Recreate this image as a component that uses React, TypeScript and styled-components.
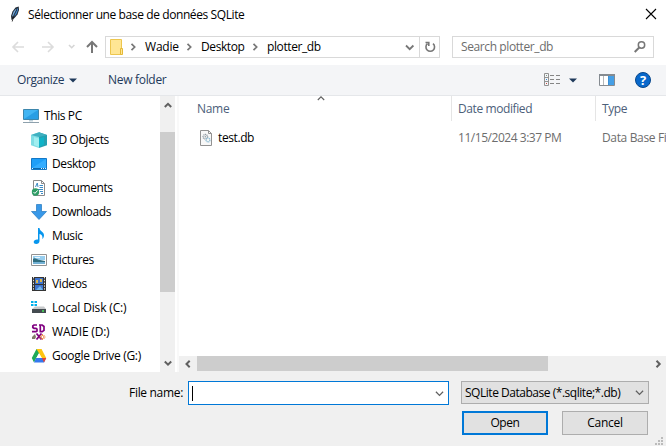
import React from 'react';
import styled, { createGlobalStyle } from 'styled-components';

const Global = createGlobalStyle`
  * { box-sizing: border-box; }
  body { margin: 0; background: #fff; overflow: hidden; }
`;

const Dialog = styled.div`
  width: 666px;
  height: 446px;
  display: flex;
  flex-direction: column;
  overflow: hidden;
  background: #fff;
  color: #000;
  font: 12px/16px 'Open Sans', 'Noto Sans', sans-serif;
`;

const Label = styled.span<{ $track?: number; $color?: string }>`
  display: block;
  flex: none;
  white-space: pre;
  color: ${(p) => p.$color ?? 'inherit'};
  letter-spacing: ${(p) => p.$track ?? -0.4}px;
`;

const Icon = styled.svg`
  display: block;
  flex: none;
  overflow: visible;
`;

const TitleBar = styled.header`
  height: 30px;
  flex: none;
  display: flex;
  align-items: center;
  padding: 0 10px 2px 7px;
  gap: 5px;
`;

const TitleText = styled(Label)`
  margin-top: 2px;
`;

const Grow = styled.div`
  flex: 1;
`;

const NavBar = styled.nav`
  height: 35px;
  flex: none;
  display: flex;
  align-items: flex-start;
  padding: 6px 12px 0 11px;
`;

const NavArrows = styled.div`
  width: 94px;
  height: 22px;
  flex: none;
`;

const AddressBox = styled.div`
  width: 335px;
  height: 22px;
  flex: none;
  display: flex;
  align-items: center;
  border: 1px solid #d9d9d9;
  padding-left: 4px;
`;

const Crumb = styled.div<{ $width: number; $indent?: number }>`
  width: ${(p) => p.$width}px;
  padding-left: ${(p) => p.$indent ?? 0}px;
  flex: none;
  display: flex;
  align-items: center;
  gap: 8px;
`;

const RefreshCell = styled.div`
  width: 20px;
  height: 20px;
  flex: none;
  display: flex;
  align-items: center;
  justify-content: center;
  border-left: 1px solid #d9d9d9;
`;

const SearchBox = styled.div`
  width: 202px;
  height: 22px;
  margin-left: 12px;
  display: flex;
  align-items: center;
  justify-content: space-between;
  border: 1px solid #d9d9d9;
  padding: 0 7px 0 8px;
`;

const Toolbar = styled.div`
  height: 31px;
  flex: none;
  display: flex;
  align-items: center;
  padding: 0 15px 0 17px;
  background: #f4f5f7;
  border-bottom: 1px solid #e5e7ea;
`;

const MenuButton = styled.div<{ $width: number; $gap: number }>`
  width: ${(p) => p.$width}px;
  flex: none;
  display: flex;
  align-items: center;
  gap: ${(p) => p.$gap}px;
`;

const HelpBadge = styled.div`
  width: 16px;
  height: 16px;
  margin-left: 20px;
  flex: none;
  border: 1px solid #07478c;
  border-radius: 50%;
  background: #0868cb;
  color: #fff;
  font: bold 13px/14px 'Open Sans', sans-serif;
  text-align: center;
`;

const Content = styled.main`
  height: 276px;
  flex: none;
  display: flex;
`;

const Sidebar = styled.ul`
  width: 160px;
  margin: 0;
  padding: 8px 0 0;
  list-style: none;
  flex: none;
`;

const TreeRow = styled.li<{ $root?: boolean }>`
  height: 24px;
  display: flex;
  align-items: center;
  gap: 5px;
  padding-left: ${(p) => (p.$root ? 23 : 31)}px;
`;

const VScroll = styled.div`
  width: 15px;
  flex: none;
  display: flex;
  flex-direction: column;
  background: #f0f0f0;
`;

const VArrow = styled.div<{ $height: number }>`
  height: ${(p) => p.$height}px;
  display: flex;
  justify-content: center;
  align-items: flex-start;
  padding-top: 5px;
`;

const VThumb = styled.div`
  height: 160px;
  background: #cdcdcd;
`;

const Splitter = styled.div`
  width: 4px;
  flex: none;
  border-right: 2px solid #f9f9f9;
`;

const FilePane = styled.section`
  flex: 1;
  min-width: 0;
  display: flex;
  flex-direction: column;
`;

const HeaderRow = styled.div`
  height: 25px;
  flex: none;
  display: flex;
  color: #4c607a;
`;

const HeaderCell = styled.div<{ $width: number; $pad: number }>`
  width: ${(p) => p.$width}px;
  flex: none;
  display: flex;
  align-items: center;
  padding-left: ${(p) => p.$pad}px;
  border-right: 1px solid #e5e5e5;

  &:last-child {
    border-right: 0;
  }
`;

const SortMark = styled.div`
  align-self: flex-start;
  margin: -2px 0 0 88px;
`;

const FileRow = styled.div`
  height: 22px;
  margin-top: 6px;
  display: flex;
  align-items: center;
  color: #6d6d6d;
`;

const FileCell = styled.div<{ $width: number; $pad: number }>`
  width: ${(p) => p.$width}px;
  flex: none;
  display: flex;
  align-items: center;
  gap: 5px;
  padding-left: ${(p) => p.$pad}px;
`;

const HScroll = styled.div`
  height: 16px;
  flex: none;
  display: flex;
  align-items: center;
  background: #f0f0f0;
  padding: 0 4px 1px 5px;
`;

const HThumb = styled.div`
  width: 351px;
  height: 15px;
  margin-left: 5px;
  background: #cdcdcd;
`;

const Footer = styled.footer`
  flex: 1;
  background: #f0f0f0;
  position: relative;
  padding: 9px 17px 0 0;
`;

const FieldRow = styled.div`
  display: flex;
  align-items: center;
  justify-content: flex-end;
  height: 24px;
`;

const FileInput = styled.div`
  width: 261px;
  height: 24px;
  margin: 0 12px 0 5px;
  display: flex;
  align-items: center;
  justify-content: space-between;
  padding: 0 4px 0 3px;
  border: 1px solid #0078d7;
  background: #fff;
`;

const Caret = styled.div`
  width: 1px;
  height: 15px;
  background: #000;
`;

const Select = styled.div`
  width: 188px;
  height: 23px;
  margin-bottom: 1px;
  display: flex;
  align-items: center;
  justify-content: space-between;
  padding: 0 4px 0 3px;
  border: 1px solid #adadad;
  background: #e1e1e1;
`;

const ButtonRow = styled.div`
  display: flex;
  justify-content: flex-end;
  gap: 14px;
  margin-top: 6px;
  padding-right: 1px;
`;

const Button = styled.button<{ $primary?: boolean }>`
  width: 86px;
  height: 24px;
  padding: 0;
  display: flex;
  align-items: center;
  justify-content: center;
  font: inherit;
  color: #000;
  background: #e1e1e1;
  border: ${(p) => (p.$primary ? '2px solid #0078d7' : '1px solid #adadad')};
`;

const Grip = styled(Icon)`
  position: absolute;
  right: 3px;
  bottom: 0;
`;

type ChevronProps = { dir: 'up' | 'down' | 'left' | 'right'; size?: number; color?: string; weight?: number };

function Chevron({ dir, size = 8, color = '#606060', weight = 2 }: ChevronProps) {
  const d = {
    up: 'M.8 6 4 2.8 7.2 6',
    down: 'M.8 2.5 4 5.7 7.2 2.5',
    left: 'M5.7.8 2.5 4l3.2 3.2',
    right: 'M2.5.8 5.7 4 2.5 7.2',
  }[dir];
  return (
    <Icon width={size} height={size} viewBox="0 0 8 8" fill="none" stroke={color} strokeWidth={weight}>
      <path d={d} />
    </Icon>
  );
}

const Feather = () => (
  <Icon width="16" height="16" viewBox="0 0 16 16">
    <path d="M4.500 14 4 10 5.500 5.500 8.500 1.500 11.700.500 12 4 10.500 8.500 7.500 12Z" fill="#222b36" />
    <path d="M5.200 10 6.500 5.800 9.200 2.500 9 6 6.500 11Z" fill="#79aee0" />
    <path d="M8.500 6 10.700 1.800 11 4 9.500 8 7.200 10.800Z" fill="#3f86cc" />
    <path d="M9.500 4 7 9 5.200 15.500" fill="none" stroke="#111" strokeWidth=".8" />
  </Icon>
);

const Folder = () => (
  <Icon width="15" height="18" viewBox="0 0 15 18">
    <path d="M.5 1.5h11v15H.5z" fill="#ffe694" stroke="#edc64e" />
    <path d="M10.500 10.500h2v6h-2z" fill="#ffe694" stroke="#e5b936" />
  </Icon>
);

const ThisPc = () => (
  <Icon width="16" height="16">
    <path d="M.5 1.5h15v10H.5z" fill="#42b5f3" stroke="#3d86ac" />
    <path d="M1 11 15 2v9z" fill="#289ee4" />
    <path d="M6 12h4v1.500H6z" fill="#bdd0da" />
    <path d="M0 14.500h16" stroke="#8ea1ad" />
  </Icon>
);

const Objects3d = () => (
  <Icon width="16" height="16">
    <path d="M0 3 8 .300V16l-8-2.700z" fill="#7fdde4" />
    <path d="M8 .300 16 3v10.300L8 16z" fill="#25a0b1" />
    <path d="M0 3 8 .300 16 3 8 5z" fill="#3fb0c0" />
    <path d="M3 5 8 6.500V15l-5-2z" fill="#a0eef0" />
    <path d="M8 6.500 13 5v7.500L8 15z" fill="#0fb3c8" />
  </Icon>
);

const DesktopIcon = () => (
  <Icon width="16" height="16">
    <path d="M.5 2.5h15v11H.5z" fill="#1e9ff8" stroke="#1478c6" />
    <path d="M1 12 15 3v9z" fill="#34adff" />
    <path d="M1 12.500h14" stroke="#0868af" />
    <path d="M1 12.500h1m8 0h1m1 0h1m1 0h1" stroke="#e5f6ff" />
  </Icon>
);

const DocumentsIcon = () => (
  <Icon width="16" height="16">
    <path d="M2.5.5h8l3 3v12h-11z" fill="#fff" stroke="#8b8b8b" />
    <path d="M10.5.5v3h3" fill="none" stroke="#8b8b8b" />
    <path d="m4.500 7 1.800-4 .7 4m1.500-1.500h3.500m-3.500 2h3.500M4.500 9.500H12m-3 2h3m-2 2h2" fill="none" stroke="#3c8bc5" />
    <circle cx="4.500" cy="12" r="3.700" fill="#2f9d66" />
    <path d="m2.500 12 1.400 1.400 2.800-3" fill="none" stroke="#fff" />
  </Icon>
);

const DownloadsIcon = () => (
  <Icon width="16" height="16">
    <path d="M5.5.5h5v7h5L8 15.500.5 7.500h5z" fill="#3898e8" stroke="#2378bf" strokeWidth=".7" />
  </Icon>
);

const MusicIcon = () => (
  <Icon width="16" height="16">
    <path d="M7 0h1.500c0 3 4.500 3.700 4.500 7.300 0 2-.8 3-1.600 3.800.5-3-.8-4.600-2.900-5.100v7c0 2-1.500 3-3.300 3-1.500 0-2.500-.8-2.500-2 0-1.900 2.300-3 4.300-2.500z" fill="#0796ee" />
  </Icon>
);

const PicturesIcon = () => (
  <Icon width="16" height="16">
    <path d="M.5 2.500h15v11H.5z" fill="#fff" stroke="#929292" />
    <path d="M2 4h12v4H2z" fill="#98ceef" />
    <path d="M2 7c2-2 4 1 7 1l5 1v1H2z" fill="#316e80" />
    <path d="M2 10h12v2H2z" fill="#74b2d5" />
    <path d="M4 5.500h5" stroke="#e6f6ff" />
  </Icon>
);

const VideosIcon = () => (
  <Icon width="16" height="16">
    <path d="M1 1h14v14H1z" fill="#343434" />
    <path d="M4 2h8v6H4zM4 9h8v5H4z" fill="#3f74ce" />
    <path d="M2.500 1v14M13.500 1v14" stroke="#e1e1e1" strokeDasharray="1.400 1.400" />
    <path d="M5 4h2v3H5zm4-1h2v3H9z" fill="#ddb749" />
    <path d="m5 14 4-4 3 4z" fill="#74b9ee" />
  </Icon>
);

const DiskIcon = () => (
  <Icon width="16" height="16">
    <path d="M0 1h2.500v2H0zm3.500 0H6v2H3.500zM0 4h2.500v2H0zm3.500 0H6v2H3.500z" fill="#00afe9" />
    <path d="m1 9 3-2.500h9l2 2.500z" fill="#c7c9cb" />
    <path d="M1 9h14v4H1z" fill="#444b50" />
    <path d="M11 11h2" stroke="#48e25a" strokeWidth="1.500" />
  </Icon>
);

const SdIcon = () => (
  <Icon width="16" height="16" fill="none">
    <path d="M6 1H3L1.800 2v1.500L3 4.300h2l1 .8V7L5 7.700H1M8 1h3.200L13 2.500v3.800L11.200 7.700H9.300V1" stroke="#800080" strokeWidth="1.700" />
    <path d="m5.500 9.500 5 6m0-6-5 6" stroke="#800080" strokeWidth="1.800" />
    <path d="M1 15v-2l3-3 1 3-1 2z" fill="#817b69" />
    <path d="M11.500 10v6m-3-3h6m-5-2 4 4m0-4-4 4" stroke="#ea8139" strokeWidth=".9" />
    <path d="M11 12h1v2h-1z" fill="#fff" />
  </Icon>
);

const DriveIcon = () => (
  <Icon width="16" height="16">
    <path d="M5.500 1h5L5 10.500 3 14.500.8 10z" fill="#1eaa59" />
    <path d="M5.500 1h5L15.200 10h-4.400z" fill="#ffc511" />
    <path d="M5 10h10.200L13 14.500H3z" fill="#3579ef" />
    <path d="m11 10 2 4.500 2.200-4.500z" fill="#e64335" />
    <path d="M8 5.300 5.300 10h5.400z" fill="#fff" />
  </Icon>
);

const DbFileIcon = () => (
  <Icon width="13" height="16">
    <path d="M.5.5h8l3 3v12H.5z" fill="#f8f8f8" stroke="#929292" />
    <path d="M8.5.5v3h3" fill="none" stroke="#929292" />
    <circle cx="5.300" cy="6.700" r="2.200" fill="none" stroke="#909ba3" strokeWidth="1.400" strokeDasharray="1 .5" />
    <circle cx="5.300" cy="6.700" r=".7" fill="#87929a" />
    <circle cx="8" cy="10" r="1.900" fill="none" stroke="#8ebcd3" strokeWidth="1.400" strokeDasharray="1 .5" />
  </Icon>
);

const ViewIcon = () => (
  <Icon width="16" height="14" fill="none">
    <path d="M.5.5h4v12h-4zM.5 4.500h4M.5 8.500h4" stroke="#929292" />
    <path d="M6 2.500h4m2 0h4M6 6.500h4m2 0h4M6 10.500h4m2 0h4" stroke="#858585" />
    <path d="M2 2.500h1" stroke="#7d9b86" />
    <path d="M2 6.500h1" stroke="#3389d0" />
    <path d="M2 10.500h1" stroke="#c34c43" />
  </Icon>
);

const PreviewIcon = () => (
  <Icon width="16" height="12">
    <path d="M.5.500h15v11H.5z" fill="#fff" stroke="#858b91" />
    <path d="M0 1h16" stroke="#858b91" strokeWidth="2" />
    <path d="M4.500 2v9" stroke="#b5b8bb" />
    <path d="M9 2h6v9H9z" fill="#459fe6" />
    <path d="M9.500 2v9" stroke="#3a8fd6" />
  </Icon>
);

const places = [
  { name: 'This PC', icon: <ThisPc />, root: true },
  { name: '3D Objects', icon: <Objects3d /> },
  { name: 'Desktop', icon: <DesktopIcon /> },
  { name: 'Documents', icon: <DocumentsIcon /> },
  { name: 'Downloads', icon: <DownloadsIcon /> },
  { name: 'Music', icon: <MusicIcon /> },
  { name: 'Pictures', icon: <PicturesIcon /> },
  { name: 'Videos', icon: <VideosIcon /> },
  { name: 'Local Disk (C:)', icon: <DiskIcon />, track: -0.15 },
  { name: 'WADIE (D:)', icon: <SdIcon />, track: -0.2 },
  { name: 'Google Drive (G:)', icon: <DriveIcon />, track: -0.3 },
];

const crumbs = [
  { name: 'Wadie', width: 60, indent: 4, track: -0.2 },
  { name: 'Desktop', width: 66 },
  { name: 'plotter_db', width: 80 },
];

export default function App() {
  return (
    <Dialog>
      <Global />
      <TitleBar>
        <Feather />
        <TitleText>Sélectionner une base de données SQLite</TitleText>
        <Grow />
        <Icon width="10" height="10" stroke="#000" strokeWidth="1.100">
          <path d="m0 0 10 10M10 0 0 10" />
        </Icon>
      </TitleBar>

      <NavBar>
        <NavArrows>
          <Icon width="94" height="22" fill="none" strokeWidth="1.600">
            <path d="M13 11H2m5-5-5 5 5 5M31 11h11m-5-5 5 5-5 5" stroke="#dcdcdc" />
            <path d="m58 9 2.700 2.700L63.400 9" stroke="#d5d5d5" />
            <path d="M81 17V6m-5 5 5-5 5 5" stroke="#777" strokeWidth="2" />
          </Icon>
        </NavArrows>
        <AddressBox>
          <Folder />
          {crumbs.map((c) => (
            <Crumb key={c.name} $width={c.width} $indent={c.indent}>
              <Chevron dir="right" color="#777" weight={1.7} />
              <Label $track={c.track}>{c.name}</Label>
            </Crumb>
          ))}
          <Grow />
          <Icon width="20" height="10" fill="none" stroke="#777" strokeWidth="1.800">
            <path d="m7 3.500 3.700 3.700L14.400 3.500" />
          </Icon>
          <RefreshCell>
            <Icon width="12" height="12" fill="none" stroke="#777" strokeWidth="1.600">
              <path d="M9 2.700A4.300 4.300 0 1 1 3.500 2.700M1.500 1.500h3.300v3.500" />
            </Icon>
          </RefreshCell>
        </AddressBox>
        <SearchBox>
          <Label $color="#6d6d6d">Search plotter_db</Label>
          <Icon width="12" height="12" fill="none" stroke="#777">
            <circle cx="7.500" cy="4" r="3.200" strokeWidth="1.500" />
            <path d="M5.200 6.500.700 11" strokeWidth="2" />
          </Icon>
        </SearchBox>
      </NavBar>

      <Toolbar>
        <MenuButton $width={91} $gap={5}>
          <Label $color="#1e395b">Organize</Label>
          <Icon width="8" height="5"><path d="M0 .5h8L4 4.500z" fill="#1e395b" /></Icon>
        </MenuButton>
        <Label $color="#1e395b" $track={-0.3}>New folder</Label>
        <Grow />
        <MenuButton $width={55} $gap={9}>
          <ViewIcon />
          <Icon width="8" height="5"><path d="M0 .5h8L4 4.500z" fill="#1e395b" /></Icon>
        </MenuButton>
        <PreviewIcon />
        <HelpBadge>?</HelpBadge>
      </Toolbar>

      <Content>
        <Sidebar>
          {places.map((p) => (
            <TreeRow key={p.name} $root={p.root}>
              {p.icon}
              <Label $track={p.track}>{p.name}</Label>
            </TreeRow>
          ))}
        </Sidebar>
        <VScroll>
          <VArrow $height={36}><Chevron dir="up" /></VArrow>
          <VThumb />
          <Grow />
          <VArrow $height={18}><Chevron dir="down" /></VArrow>
        </VScroll>
        <Splitter />
        <FilePane>
          <HeaderRow>
            <HeaderCell $width={273} $pad={18}>
              <Label $track={-0.3}>Name</Label>
              <SortMark><Chevron dir="up" weight={1.1} /></SortMark>
            </HeaderCell>
            <HeaderCell $width={144} $pad={6}><Label>Date modified</Label></HeaderCell>
            <HeaderCell $width={70} $pad={6}><Label>Type</Label></HeaderCell>
          </HeaderRow>
          <FileRow>
            <FileCell $width={273} $pad={21}><DbFileIcon /><Label $color="#000">test.db</Label></FileCell>
            <FileCell $width={144} $pad={6}><Label $track={-0.46}>11/15/2024 3:37 PM</Label></FileCell>
            <FileCell $width={70} $pad={6}><Label $track={-0.35}>Data Base Fi</Label></FileCell>
          </FileRow>
          <Grow />
          <HScroll>
            <Chevron dir="left" />
            <HThumb />
            <Grow />
            <Chevron dir="right" />
          </HScroll>
        </FilePane>
      </Content>

      <Footer>
        <FieldRow>
          <Label $track={-0.32}>File name:</Label>
          <FileInput><Caret /><Chevron dir="down" size={9} weight={1.1} /></FileInput>
          <Select>
            <Label $track={-0.47}>SQLite Database (*.sqlite;*.db)</Label>
            <Chevron dir="down" size={9} weight={1.1} />
          </Select>
        </FieldRow>
        <ButtonRow>
          <Button $primary><Label>Open</Label></Button>
          <Button><Label $track={-0.3}>Cancel</Label></Button>
        </ButtonRow>
        <Grip width="8" height="9" fill="#bbb">
          <path d="M6 0h2v2H6zM3 3h2v2H3zM6 3h2v2H6zM0 6h2v2H0zM3 6h2v2H3zM6 6h2v2H6z" />
        </Grip>
      </Footer>
    </Dialog>
  );
}
